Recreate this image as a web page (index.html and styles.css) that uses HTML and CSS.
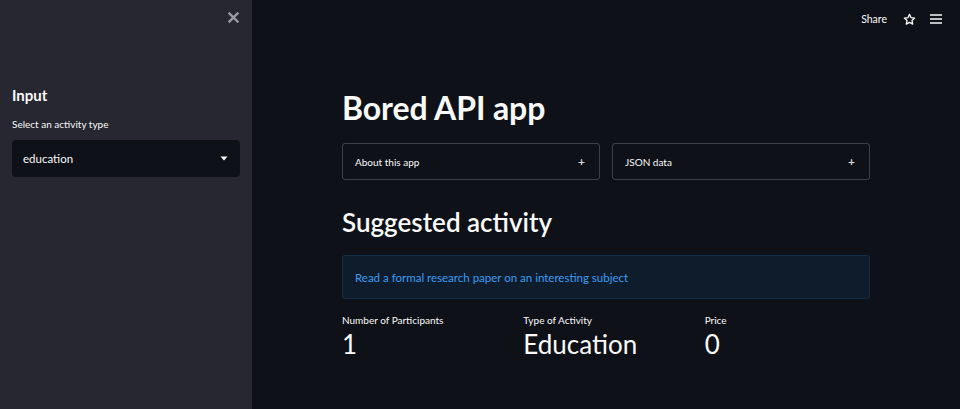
FILE: index.html
```html
<!DOCTYPE html>
<html>
<head>
<meta charset="utf-8">
<link rel="stylesheet" href="styles.css">
</head>
<body>
<div class="app">
  <aside class="sidebar">
    <div class="sidebar-top">
      <button class="close-btn" aria-label="Close sidebar">
        <svg width="11" height="11" viewBox="0 0 11 11"><path d="M1.5 1.5 L9.5 9.5 M9.5 1.5 L1.5 9.5" stroke="#9a9ba3" stroke-width="2.4" stroke-linecap="square"/></svg>
      </button>
    </div>
    <div class="sidebar-body">
      <h2 class="side-heading">Input</h2>
      <label class="field-label">Select an activity type</label>
      <div class="select">
        <span>education</span>
        <svg width="8" height="5" viewBox="0 0 8 5"><path d="M0.5 0.5 L7.5 0.5 L4 4.5 Z" fill="#fafafa"/></svg>
      </div>
    </div>
  </aside>
  <main class="main">
    <header class="toolbar">
      <span class="share">Share</span>
      <svg class="star" width="13" height="13" viewBox="0 0 24 24"><path d="M12 2.5 L14.9 8.6 L21.5 9.4 L16.6 14 L17.9 20.6 L12 17.3 L6.1 20.6 L7.4 14 L2.5 9.4 L9.1 8.6 Z" fill="none" stroke="#fafafa" stroke-width="2.4" stroke-linejoin="round"/></svg>
      <svg class="menu" width="12" height="10" viewBox="0 0 12 10"><path d="M0 1 H12 M0 5 H12 M0 9 H12" stroke="#fafafa" stroke-width="1.6"/></svg>
    </header>
    <div class="content">
      <h1 class="title">Bored API app</h1>
      <div class="expanders">
        <div class="expander"><span>About this app</span><span class="plus">+</span></div>
        <div class="expander"><span>JSON data</span><span class="plus">+</span></div>
      </div>
      <h2 class="subtitle">Suggested activity</h2>
      <div class="info">Read a formal research paper on an interesting subject</div>
      <div class="metrics">
        <div class="metric"><div class="metric-label">Number of Participants</div><div class="metric-value">1</div></div>
        <div class="metric"><div class="metric-label">Type of Activity</div><div class="metric-value">Education</div></div>
        <div class="metric"><div class="metric-label">Price</div><div class="metric-value">0</div></div>
      </div>
    </div>
  </main>
</div>
</body>
</html>
```
FILE: styles.css
```css
* { box-sizing: border-box; }
html, body { margin: 0; padding: 0; height: 100%; }
body {
  font-family: Lato, "Noto Sans", sans-serif;
  color: #fafafa;
  background: #0e1117;
}
.app { display: flex; height: 409px; overflow: hidden; }
.sidebar {
  width: 252px;
  flex: none;
  background: #262730;
  display: flex;
  flex-direction: column;
}
.sidebar-top { display: flex; justify-content: flex-end; padding: 12px 13px 0 0; height: 24px; }
.close-btn { background: none; border: 0; padding: 0; width: 11px; height: 11px; display: flex; }
.sidebar-body { padding: 61px 12px 0 12px; }
.side-heading { margin: 0; font-size: 15px; font-weight: 700; line-height: 20px; }
.field-label { display: block; margin-top: 12px; font-size: 10px; line-height: 14px; color: #fafafa; }
.select {
  margin-top: 9px;
  height: 37px;
  background: #0e1117;
  border-radius: 4px;
  display: flex;
  align-items: center;
  justify-content: space-between;
  padding: 0 12px 0 11px;
  font-size: 11.5px;
}
.main { flex: 1; display: flex; flex-direction: column; }
.toolbar {
  height: 38px;
  display: flex;
  align-items: center;
  justify-content: flex-end;
  padding-right: 18px;
}
.share { font-size: 10.5px; margin-right: 16px; }
.star { margin-right: 14px; }
.content { width: 528px; margin: 0 auto; padding-top: 50px; }
.title { margin: 0; font-size: 32px; font-weight: 700; line-height: 40px; letter-spacing: -0.1px; }
.expanders { display: grid; grid-template-columns: 1fr 1fr; gap: 12px; margin-top: 15px; }
.expander {
  height: 37px;
  border: 1px solid rgba(250, 250, 250, 0.2);
  border-radius: 3px;
  display: flex;
  align-items: center;
  justify-content: space-between;
  padding: 0 14px 0 12px;
  font-size: 10px;
}
.plus { font-size: 12px; font-weight: 700; color: #d8d8dc; }
.subtitle { margin: 24px 0 0 0; font-size: 26px; font-weight: 600; line-height: 36px; }
.info {
  margin-top: 15px;
  height: 44px;
  background: rgba(28, 131, 225, 0.1);
  border: 1px solid rgba(28, 131, 225, 0.15);
  border-radius: 3px;
  color: #3d9df3;
  font-size: 11.5px;
  display: flex;
  align-items: center;
  padding: 0 12px;
}
.metrics { display: grid; grid-template-columns: 1fr 1fr 1fr; gap: 16px; margin-top: 15px; }
.metric-label { font-size: 10px; line-height: 12px; }
.metric-value { font-size: 26px; line-height: 32px; margin-top: 2px; font-weight: 400; }
```
